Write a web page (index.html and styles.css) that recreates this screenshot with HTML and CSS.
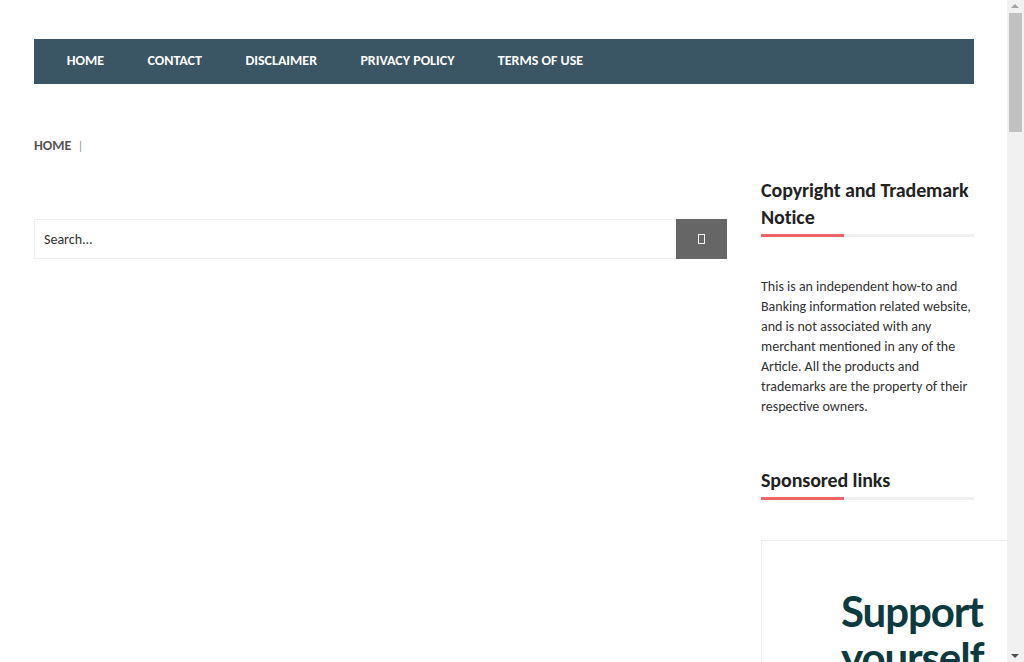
FILE: index.html
```html
<!DOCTYPE html>
<html>
<head>
<meta charset="utf-8">
<link rel="stylesheet" href="styles.css">
</head>
<body>
<div class="page">
  <nav class="nav">
    <a href="#">HOME</a>
    <a href="#">CONTACT</a>
    <a href="#">DISCLAIMER</a>
    <a href="#">PRIVACY POLICY</a>
    <a href="#">TERMS OF USE</a>
  </nav>
  <div class="crumbs"><span class="crumb">HOME</span><span class="sep">|</span></div>
  <div class="cols">
    <main class="main">
      <form class="search">
        <input class="search-input" type="text" placeholder="Search...">
        <button class="search-btn" type="button"><span class="tofu"></span></button>
      </form>
    </main>
    <aside class="side">
      <section class="widget">
        <h3 class="wtitle">Copyright and Trademark Notice</h3>
        <div class="wline"><span class="wline-red"></span></div>
        <p class="wtext">This is an independent how-to and Banking information related website, and is not associated with any merchant mentioned in any of the Article. All the products and trademarks are the property of their respective owners.</p>
      </section>
      <section class="widget widget-ad">
        <h3 class="wtitle">Sponsored links</h3>
        <div class="wline"><span class="wline-red"></span></div>
        <div class="ad">
          <div class="ad-text">Support<br>yourself</div>
        </div>
      </section>
    </aside>
  </div>
</div>
<div class="scrollbar">
  <span class="arrow arrow-up"></span>
  <span class="thumb"></span>
  <span class="arrow arrow-down"></span>
</div>
</body>
</html>
```

FILE: styles.css
```css
html, body {
  margin: 0;
  padding: 0;
  background: #fff;
}
body {
  font-family: Carlito, Calibri, Lato, "Liberation Sans", sans-serif;
  color: #333;
  overflow: hidden;
  height: 662px;
}
.page {
  width: 940px;
  margin-left: 34px;
  padding-top: 39px;
}
.nav {
  display: flex;
  height: 45px;
  align-items: center;
  background: #3a5563;
  padding-left: 11px;
}
.nav a {
  color: #fff;
  text-decoration: none;
  font-weight: bold;
  font-size: 14px;
  padding: 0 21.7px;
  position: relative;
  top: -1px;
}
.crumbs {
  margin-top: 52px;
  height: 18px;
  display: flex;
  align-items: center;
  font-size: 14px;
}
.crumb {
  font-weight: bold;
  color: #555;
}
.sep {
  color: #999;
  margin-left: 6px;
  font-size: 13px;
}
.cols {
  display: flex;
  gap: 34px;
  margin-top: 24px;
}
.main {
  width: 693px;
  padding-top: 41px;
}
.search {
  display: flex;
  height: 40px;
  margin: 0;
}
.search-input {
  flex: 1;
  box-sizing: border-box;
  height: 40px;
  border: 1px solid #eee;
  border-right: none;
  padding: 0 9px;
  font-family: Carlito, Calibri, Lato, "Liberation Sans", sans-serif;
  font-size: 14px;
  color: #333;
  outline: none;
}
.search-input::placeholder {
  color: #333;
}
.search-btn {
  width: 51px;
  height: 40px;
  border: none;
  background: #666;
  display: flex;
  align-items: center;
  justify-content: center;
  padding: 0;
}
.tofu {
  width: 5px;
  height: 8px;
  border: 1px solid #f2f2f2;
}
.side {
  width: 213px;
  margin-top: -1px;
}
.wtitle {
  margin: 0;
  font-size: 20px;
  line-height: 27px;
  font-weight: bold;
  color: #222;
  letter-spacing: -0.1px;
}
.wline {
  margin-top: 3px;
  height: 3px;
  background: #f0f0f0;
  display: flex;
}
.wline-red {
  width: 83px;
  background: #ee6467;
}
.wtext {
  margin: 40px 0 0;
  font-size: 14px;
  line-height: 20px;
  color: #333;
}
.widget-ad {
  margin-top: 50px;
}
.ad {
  margin-top: 40px;
  width: 300px;
  height: 250px;
  box-sizing: border-box;
  border: 1px solid #eee;
  padding: 47px 0 0 79px;
}
.ad-text {
  font-family: Lato, Inter, sans-serif;
  font-weight: bold;
  font-size: 42px;
  line-height: 46px;
  color: #0b3a3f;
  letter-spacing: -1.1px;
}
.scrollbar {
  position: fixed;
  top: 0;
  right: 0;
  width: 17px;
  height: 662px;
  background: #f1f1f1;
}
.thumb {
  position: absolute;
  left: 2px;
  top: 13px;
  width: 13px;
  height: 119px;
  background: #c1c1c1;
}
.arrow {
  position: absolute;
  left: 4px;
  width: 0;
  height: 0;
  border-left: 4.5px solid transparent;
  border-right: 4.5px solid transparent;
}
.arrow-up {
  top: 4px;
  border-bottom: 4px solid #a3a3a3;
}
.arrow-down {
  bottom: 4px;
  border-top: 4px solid #505050;
}
```
